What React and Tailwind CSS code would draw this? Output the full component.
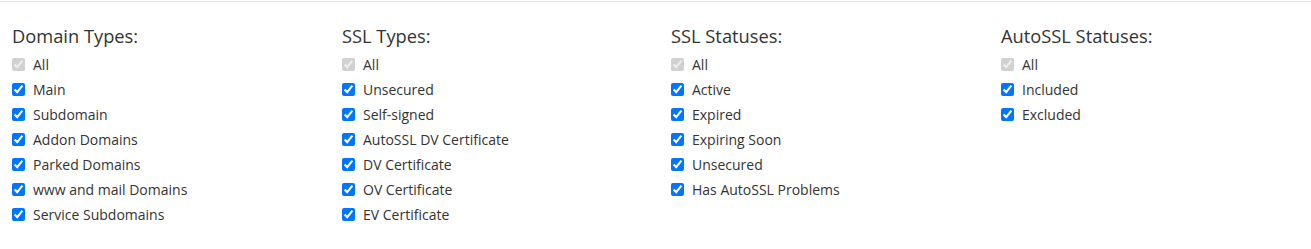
import React from 'react';

const groups = [
  {
    title: 'Domain Types:',
    items: ['Main', 'Subdomain', 'Addon Domains', 'Parked Domains', 'www and mail Domains', 'Service Subdomains'],
  },
  {
    title: 'SSL Types:',
    items: ['Unsecured', 'Self-signed', 'AutoSSL DV Certificate', 'DV Certificate', 'OV Certificate', 'EV Certificate'],
  },
  {
    title: 'SSL Statuses:',
    items: ['Active', 'Expired', 'Expiring Soon', 'Unsecured', 'Has AutoSSL Problems'],
  },
  {
    title: 'AutoSSL Statuses:',
    items: ['Included', 'Excluded'],
  },
];

const Option = ({ label, disabled = false }) => (
  <label className="flex items-center gap-2 h-[25px] text-[14px] text-[#333]">
    <input
      type="checkbox"
      checked
      readOnly
      disabled={disabled}
      className="m-0 w-[13px] h-[13px]"
    />
    <span>{label}</span>
  </label>
);

export default function App() {
  return (
    <div className="bg-white w-[1311px] h-[249px] font-['Open_Sans',sans-serif]">
      <div className="h-px mt-px bg-[#e3e3e3]" />
      <div className="grid grid-cols-[330px_329px_330px_1fr] pl-3 pt-[22px]">
        {groups.map((g) => (
          <div key={g.title}>
            <h3 className="text-[18.3px] leading-[24px] text-[#333] mb-[4px]">{g.title}</h3>
            <Option label="All" disabled />
            {g.items.map((item) => (
              <Option key={item} label={item} />
            ))}
          </div>
        ))}
      </div>
    </div>
  );
}
